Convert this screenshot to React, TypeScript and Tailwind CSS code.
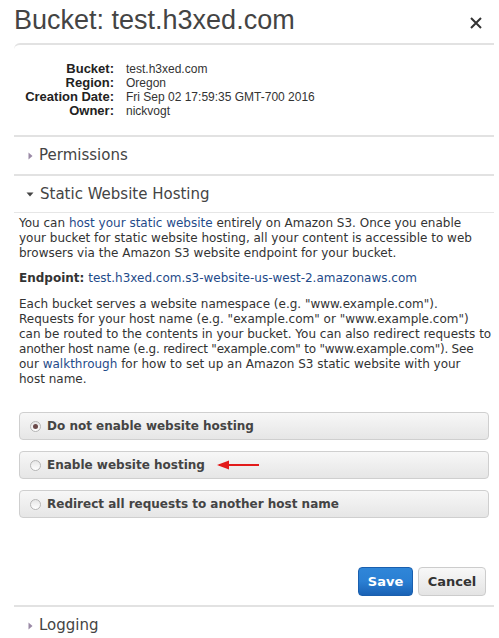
import React from 'react';

const Caret = ({ open }: { open?: boolean }) =>
  open ? (
    <svg width="8" height="5" viewBox="0 0 8 5" className="mr-[6px]">
      <path d="M0.5 0.5 L7.5 0.5 L4 4.5 Z" fill="#444" />
    </svg>
  ) : (
    <svg width="5" height="8" viewBox="0 0 5 8" className="mr-[6px] ml-[2px]">
      <path d="M0.5 0.5 L4.5 4 L0.5 7.5 Z" fill="#9a8aa6" />
    </svg>
  );

const Radio = ({ checked }: { checked?: boolean }) => (
  <span className="w-[11px] h-[11px] rounded-full border border-[#b5b5b5] bg-gradient-to-b from-[#e6e6e6] to-white flex items-center justify-center mr-[6px]">
    {checked && <span className="w-[5px] h-[5px] rounded-full bg-[#6b4a4a]" />}
  </span>
);

const Option = ({ label, checked, arrow }: { label: string; checked?: boolean; arrow?: boolean }) => (
  <div className="h-[28px] rounded-[4px] border border-[#cfcfcf] bg-gradient-to-b from-[#f7f7f7] to-[#e6e6e6] flex items-center pl-[10px] text-[12px] font-bold text-[#444]">
    <Radio checked={checked} />
    <span>{label}</span>
    {arrow && (
      <svg width="44" height="10" viewBox="0 0 44 10" className="ml-[12px]">
        <path d="M2 5 L42 5" stroke="#e21b1b" strokeWidth="2" />
        <path d="M0 5 L12 0.5 L12 9.5 Z" fill="#e21b1b" />
      </svg>
    )}
  </div>
);

const Section = ({ title, open }: { title: string; open?: boolean }) => (
  <div
    className={`${open ? 'h-[36px]' : 'h-[37px]'} flex items-center pl-[12px] text-[15px] text-[#444] font-['DejaVu_Sans',Verdana,sans-serif]`}
  >
    <Caret open={open} />
    <span>{title}</span>
  </div>
);

export default function App() {
  const link = 'text-[#1f4b8a]';
  return (
    <div className="w-[499px] h-[638px] overflow-hidden bg-white pl-[14px] pr-[5px] font-['Liberation_Sans',Arial,sans-serif] text-[#333]">
      <div className="h-[43px] flex items-center justify-between">
        <h1 className="text-[27px] leading-none text-[#444] -mt-[2px]">Bucket: test.h3xed.com</h1>
        <svg width="12" height="12" viewBox="0 0 12 12" className="mr-[12px] mt-[2px]">
          <path d="M1 1 L11 11 M11 1 L1 11" stroke="#333" strokeWidth="2" />
        </svg>
      </div>

      <div className="border-t-2 border-[#e2e2e2] rounded-tl-[6px]">
        <div className="grid grid-cols-[100px_1fr] gap-x-[12px] text-[12px] leading-[14px] pt-[17px] pb-[17px]">
          <span className="text-right font-bold text-[13px] text-[#222]">Bucket:</span>
          <span>test.h3xed.com</span>
          <span className="text-right font-bold text-[13px] text-[#222]">Region:</span>
          <span>Oregon</span>
          <span className="text-right font-bold text-[13px] text-[#222]">Creation Date:</span>
          <span>Fri Sep 02 17:59:35 GMT-700 2016</span>
          <span className="text-right font-bold text-[13px] text-[#222]">Owner:</span>
          <span>nickvogt</span>
        </div>
      </div>

      <div className="border-t-2 border-[#e2e2e2]">
        <Section title="Permissions" />
      </div>

      <div className="border-t-2 border-[#e2e2e2]">
        <Section title="Static Website Hosting" open />
        <div className="border-t border-[#e6e6e6] pl-[5px] pr-[5px] pt-[3px] text-[12px] leading-[15px] text-[#333] font-['DejaVu_Sans',Verdana,sans-serif]">
          <p>
            You can <span className={link}>host your static website</span> entirely on Amazon S3. Once you enable your
            bucket for static website hosting, all your content is accessible to web browsers via the Amazon S3
            website endpoint for your bucket.
          </p>
          <p className="mt-[10px]">
            <span className="font-bold">Endpoint:</span>{' '}
            <span className={link}>test.h3xed.com.s3-website-us-west-2.amazonaws.com</span>
          </p>
          <p className="mt-[11px] whitespace-nowrap">
            Each bucket serves a website namespace (e.g. "www.example.com").
            <br />
            Requests for your host name (e.g. "example.com" or "www.example.com")
            <br />
            can be routed to the contents in your bucket. You can also redirect requests to
            <br />
            <span className="tracking-[-0.22px]">
              another host name (e.g. redirect "example.com" to "www.example.com"). See
            </span>
            <br />
            our <span className={link}>walkthrough</span> for how to set up an Amazon S3 static website with your
            <br />
            host name.
          </p>

          <div className="mt-[25px] flex flex-col gap-[11px]">
            <Option label="Do not enable website hosting" checked />
            <Option label="Enable website hosting" arrow />
            <Option label="Redirect all requests to another host name" />
          </div>

          <div className="mt-[49px] flex justify-end gap-[5px] pr-[3px] text-[13px] font-bold">
            <button className="h-[29px] w-[55px] rounded-[4px] border border-[#1a5fae] bg-gradient-to-b from-[#2f86d8] via-[#2a7fd3] to-[#1a62b5] text-white">
              Save
            </button>
            <button className="h-[29px] w-[68px] rounded-[4px] border border-[#cccccc] bg-gradient-to-b from-[#f8f8f8] to-[#e4e4e4] text-[#333]">
              Cancel
            </button>
          </div>
        </div>
      </div>

      <div className="mt-[9px] border-t-2 border-[#e2e2e2]">
        <Section title="Logging" />
      </div>
    </div>
  );
}
